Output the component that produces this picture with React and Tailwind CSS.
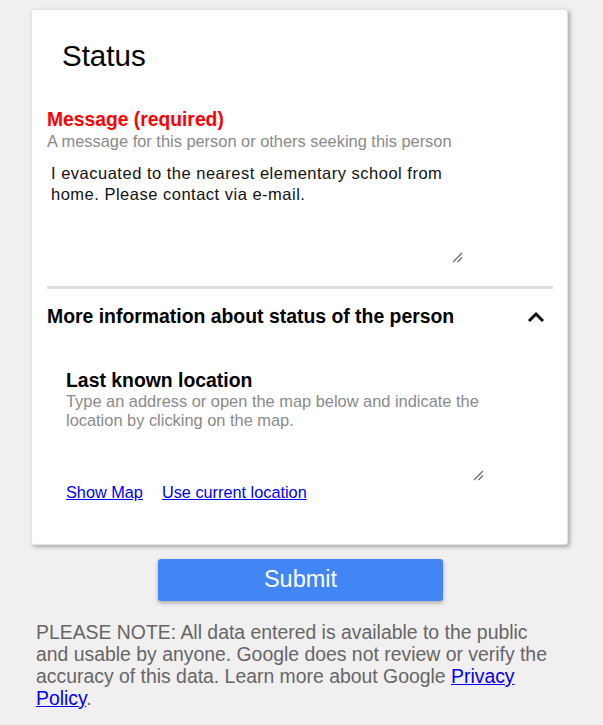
import React from "react";

function Grip() {
  return (
    <svg width="11" height="11" viewBox="0 0 11 11" className="block">
      <line x1="1" y1="10" x2="10" y2="1" stroke="#6b6b6b" strokeWidth="1.3" />
      <line x1="5.5" y1="10" x2="10" y2="5.5" stroke="#6b6b6b" strokeWidth="1.3" />
    </svg>
  );
}

export default function App() {
  return (
    <div className="min-h-[725px] w-[603px] bg-[#f1eff0] pt-[9px] font-['Liberation_Sans',Arial,sans-serif]">
      <div className="ml-[31px] w-[537px] h-[536px] bg-white rounded-[3px] shadow-[2px_2px_4px_rgba(0,0,0,0.3)] border border-[#e4e4e4] pt-[29px] px-[15px]">
        <h1 className="ml-[15px] text-[29.5px] leading-[34px] text-black">Status</h1>
        <div className="mt-[36px] text-[19.3px] leading-[22px] font-bold text-[#ff0000]">Message (required)</div>
        <div className="mt-[1px] text-[16.4px] leading-[19px] text-[#8a8a8a]">A message for this person or others seeking this person</div>
        <div className="relative mt-[12px] h-[108px] w-[417px] pl-[4px] text-[16.5px] leading-[21px] tracking-[0.5px] text-[#111]">
          <div className="w-[410px]">I evacuated to the nearest elementary school from home. Please contact via e-mail.</div>
          <div className="absolute right-[1px] bottom-[8px]"><Grip /></div>
        </div>
        <div className="mt-[15px] h-[3px] w-[506px] bg-[#dedede]" />
        <div className="flex items-center justify-between w-[506px] mt-[17px] h-[22px]">
          <div className="text-[19.4px] font-bold text-black">More information about status of the person</div>
          <svg width="18" height="12" viewBox="0 0 18 12" className="mr-[8px]">
            <path d="M2 10 L9 3 L16 10" fill="none" stroke="#111" strokeWidth="3" />
          </svg>
        </div>
        <div className="pl-[19px] pt-[41px]">
          <div className="text-[19.4px] leading-[22px] font-bold text-black">Last known location</div>
          <div className="mt-[1px] w-[430px] text-[16.4px] leading-[19px] text-[#8a8a8a]">Type an address or open the map below and indicate the location by clicking on the map.</div>
          <div className="relative h-[53px] w-[418px]">
            <div className="absolute right-0 bottom-[2px]"><Grip /></div>
          </div>
          <div className="flex gap-[19px] text-[16.3px] leading-[18px] text-[#0000ee]">
            <a href="#" className="underline">Show Map</a>
            <a href="#" className="underline">Use current location</a>
          </div>
        </div>
      </div>
      <div className="flex justify-center mt-[14px] ml-[-2px]">
        <button className="w-[285px] h-[42px] rounded-[3px] bg-[#4285f4] text-white text-[23.5px] shadow-[0_2px_4px_rgba(0,0,0,0.3)]">Submit</button>
      </div>
      <p className="mt-[20px] ml-[36px] w-[520px] text-[19.4px] leading-[22px] text-[#666]">
        PLEASE NOTE: All data entered is available to the public and usable by anyone. Google does not review or verify the accuracy of this data. Learn more about Google <a href="#" className="underline text-[#0000ee]">Privacy Policy</a>.
      </p>
    </div>
  );
}
